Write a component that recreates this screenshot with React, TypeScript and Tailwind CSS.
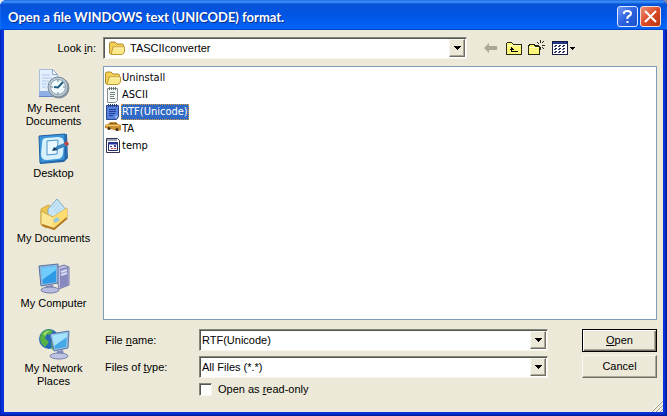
import type { ReactNode } from "react"

const sunken = "border border-[#85877c] border-r-[#f7f5ec] border-b-[#f7f5ec] bg-white shadow-[inset_1px_1px_0_#55564e]"
const raised = "border border-[#f8f7f0] border-r-[#716f64] border-b-[#716f64] bg-[#ece9d8] shadow-[inset_-1px_-1px_0_#aca899]"

const FolderIcon = () => (
    <svg width="16" height="16" viewBox="0 0 16 16" className="shrink-0">
        <path d="M.5 4Q.5 2 2 2h4l2 2h5q1.500 0 1.500 1.500V13L13 14.500H2L.5 13z" fill="#f3cf58" stroke="#ab8a28" />
        <path d="M2 14.500 4 7h11.500v5L13 14.500z" fill="#fce989" stroke="#bd9a35" />
        <path d="M5 8h10" stroke="#fff9cc" />
    </svg>
)

const NotepadIcon = () => (
    <svg width="16" height="16" viewBox="0 0 16 16" className="shrink-0">
        <path d="M2.500 1.500h10v12l-2 2h-8z" fill="#f4f6f3" stroke="#83908d" />
        <path d="M4.500 0v3M6.500 0v3M8.500 0v3M10.500 0v3" stroke="#68716c" />
        <path d="M5 5.500h5M5 7.500h5M5 9.500h4M5 11.500h5" stroke="#76847e" />
    </svg>
)

const RtfIcon = () => (
    <svg width="16" height="16" viewBox="0 0 16 16" className="shrink-0">
        <path d="M1.500 1.500h12v11l-2 3h-10z" fill="#5580dc" stroke="#294691" />
        <path d="M3.500 0v3M5.500 0v3M7.500 0v3M9.500 0v3M11.500 0v3" stroke="#283c7c" />
        <path d="M4 5.500h7M4 7.500h7M4 9.500h6M4 11.500h4" stroke="#223f9a" />
        <path d="m10 12 3-1-2 4z" fill="#a6baf4" />
    </svg>
)

const CarIcon = () => (
    <svg width="16" height="16" viewBox="0 0 16 16" className="shrink-0">
        <path d="M0 4 3 3 5 1h6L13 3l3 1v5l-3 1-8-2-5-1z" fill="#c98f35" />
        <path d="m4 3 2-1h2v1zM9 2h2l1 1H9z" fill="#775622" />
        <path d="M1 4.500h13" stroke="#f4cb67" />
        <circle cx="4" cy="7.500" r="1.500" fill="#463319" />
        <circle cx="12" cy="8.500" r="1.500" fill="#463319" />
    </svg>
)

const TempIcon = () => (
    <svg width="16" height="16" viewBox="0 0 16 16" className="shrink-0">
        <path d="M1.500.5h11l2 2v12h-13z" fill="white" stroke="#30334f" />
        <path d="M2 2h10" stroke="#a1a6ba" strokeWidth="2" />
        <path d="M3.500 4.500h9v8h-9z" fill="#f6f5ff" stroke="#24295f" />
        <path d="M4 5.500h8" stroke="#2635a6" strokeWidth="2" />
        <path d="M5 8h2v1H5zM9 7h2v2H9z" fill="#3b42a0" />
        <path d="M6 10h2v1H6zM9 10h2v1H9z" fill="#cf3945" />
    </svg>
)

const RecentIcon = () => (
    <svg width="32" height="32" viewBox="0 0 32 32">
        <path d="M1.500 1.500h13l5 5V28h-18z" fill="#e3effc" stroke="#a9bddb" />
        <path d="m14.500 1.500 5 5h-5z" fill="#fff" stroke="#8fa5c8" />
        <path d="M4 7h8M4 10h10M4 13h7M4 16h5M4 19h4" stroke="#aec9ec" />
        <path d="M1 23h14v6H1z" fill="#8fb0e6" />
        <path d="M1 28.500h17" stroke="#6585be" />
        <circle cx="21" cy="20" r="10.500" fill="#8996a0" />
        <circle cx="20" cy="19" r="10" fill="#b9c8d1" stroke="#7a8b97" />
        <circle cx="20" cy="19" r="7.500" fill="#f0fafd" stroke="#8fa4b0" />
        <path d="M20 12v2M20 24v2M13 19h2M25 19h2" stroke="#6b8697" />
        <path d="m25 14-5 5.500-4-.5" fill="none" stroke="#1f6180" strokeWidth="2" />
    </svg>
)

const DesktopIcon = () => (
    <svg width="32" height="32" viewBox="0 0 32 32">
        <path d="m2 3 27-2 1 24-4 4-24 2z" fill="#276bad" />
        <path d="m1 3 26-2v26L2 30z" fill="#3c94d9" stroke="#2362a5" />
        <path d="m8 5 12-1q6 0 6 6l-1 11q-1 5-6 5L9 27q-6 0-6-6L4 10q0-5 4-5z" fill="#d6f0fc" />
        <path d="m9 8 11-1-1 14-10 1z" fill="#eaf8ff" stroke="#4e91c4" />
        <path d="m15 17 4-4 10-4 2 3-10 4z" fill="#3b84bf" />
        <path d="m26 10 3-2 2 3-3 2z" fill="#c8453d" />
        <path d="m14 18 2-4 4 3z" fill="#173d64" />
    </svg>
)

const DocumentsIcon = () => (
    <svg width="32" height="32" viewBox="0 0 32 32">
        <path d="m3 11 7-4 4 2 1 18-7 3-5-4z" fill="#edc44c" stroke="#d3aa42" />
        <path d="m10 11 9-10 10 12-8 11-11-5z" fill="#c5e5f7" stroke="#82aac6" />
        <path d="m14 10 5-5M16 13l5-6M18 15l5-5M20 17l4-4" stroke="#a9d2ec" />
        <path d="m3 13 12 6 14-9v10L16 31 3 27z" fill="#fbe794" stroke="#cda447" />
        <path d="m15 19-1 11 15-10V10z" fill="#ffdc70" />
        <path d="m15 22 4-3 3 3-5 3z" fill="#95c8e2" />
        <path d="m4 27 12 4 13-11" fill="none" stroke="#b37b21" strokeWidth="2" />
    </svg>
)

const ComputerIcon = () => (
    <svg width="32" height="32" viewBox="0 0 32 32">
        <path d="m17 5 9-3 5 2v18l-10 4z" fill="#bdbce1" stroke="#777da7" />
        <path d="m22 6 8-2v18l-8 3z" fill="#8889bf" />
        <path d="m23 9 6-2M23 12l6-2" stroke="#d8daf2" strokeWidth="2" />
        <path d="m1 3 19-2v19L3 23z" fill="#92b5dd" stroke="#5474a2" />
        <path d="m3 5 15-2v16L5 21z" fill="#2c9ae7" />
        <path d="M3 5 18 3v4L4 17z" fill="#71ccfa" />
        <path d="m8 23 7-1 1 4H7z" fill="#8085b9" />
        <ellipse cx="12" cy="27" rx="9" ry="3" fill="#b9bddd" stroke="#757bab" />
    </svg>
)

const NetworkIcon = () => (
    <svg width="32" height="32" viewBox="0 0 32 32">
        <circle cx="11" cy="11" r="10" fill="#2469ba" />
        <path d="M3 6Q9-1 15 3l-3 4-3-1-2 4 4 4-4 5Q0 14 3 6M13 14l6-3v8l-5 3z" fill="#56b244" />
        <path d="M5 6q3-4 7-3-4 2-5 5z" fill="#9cda6b" />
        <path d="m12 6 19-3-1 17-14 3z" fill="#97bce1" stroke="#5778aa" />
        <path d="m14 7 15-2-1 14-11 2z" fill="#45a9e8" />
        <path d="m14 7 15-2v4L16 18z" fill="#a5e2fc" />
        <path d="m19 23 6-1 1 5-8 1z" fill="#7f8dbc" />
        <ellipse cx="21" cy="28" rx="9" ry="3" fill="#bec5e2" stroke="#767fac" />
    </svg>
)

const Triangle = () => (
    <svg width="7" height="4" viewBox="0 0 7 4" shapeRendering="crispEdges">
        <path d="M0 0h7v1H0zM1 1h5v1H1zM2 2h3v1H2zM3 3h1v1H3z" fill="black" />
    </svg>
)

const BackIcon = () => (
    <svg width="16" height="16" viewBox="0 0 16 16">
        <path d="m1 8 5-5v3h8v4H6v3z" fill="#aaa797" />
    </svg>
)

const UpIcon = () => (
    <svg width="16" height="16" viewBox="0 0 16 16" shapeRendering="crispEdges">
        <path d="M.5 14.500v-11l1-1h4l2 2h8v10z" fill="#fcf679" stroke="#29290f" />
        <path d="M1 5.500h14" stroke="#fffccb" />
        <path d="M5.500 12V7M3.500 9.500h4M4.500 8.500h2M5 11.500h7" fill="none" stroke="black" />
    </svg>
)

const NewFolderIcon = () => (
    <svg width="17" height="16" viewBox="0 0 17 16" shapeRendering="crispEdges">
        <path d="M.5 14.500v-9l2-1h4l1 2h4v8z" fill="#fcf679" stroke="#29290f" />
        <path d="M1 7.500h10" stroke="#fffccb" />
        <path d="M12.500 0v3M12.500 7v3M8 5.500h3M14 5.500h3M9 2l2 2M14 3l2-2M14 7l2 2" stroke="#29291e" />
    </svg>
)

const ViewsIcon = () => (
    <svg width="16" height="14" viewBox="0 0 16 14" shapeRendering="crispEdges">
        <path d="M.5.5h15v13H.5z" fill="white" stroke="#181d45" />
        <path d="M1 2h14" stroke="#243585" strokeWidth="2" />
        <path d="M2 5h2v1H2zM6 5h2v1H6zM10 5h2v1h-2zM2 8h2v1H2zM6 8h2v1H6zM10 8h2v1h-2zM2 11h2v1H2zM6 11h2v1H6zM10 11h2v1h-2z" fill="#3b4385" />
        <path d="M3 4h2v1H3zM7 4h2v1H7zM11 4h2v1h-2zM3 7h2v1H3zM7 7h2v1H7zM11 7h2v1h-2zM3 10h2v1H3zM7 10h2v1H7zM11 10h2v1h-2z" fill="#222744" />
    </svg>
)

const places = [
    { name: "My Recent Documents", icon: <RecentIcon /> },
    { name: "Desktop", icon: <DesktopIcon /> },
    { name: "My Documents", icon: <DocumentsIcon /> },
    { name: "My Computer", icon: <ComputerIcon /> },
    { name: "My Network Places", icon: <NetworkIcon /> },
]

const files = [
    { name: "Uninstall", icon: <FolderIcon /> },
    { name: "ASCII", icon: <NotepadIcon /> },
    { name: "RTF(Unicode)", icon: <RtfIcon />, selected: true },
    { name: "TA", icon: <CarIcon /> },
    { name: "temp", icon: <TempIcon /> },
]

const Arrow = () => (
    <span className={`pointer-events-none flex w-4 shrink-0 items-center justify-center ${raised}`}>
        <Triangle />
    </span>
)

const Combo = ({ children, className = "" }: { children: ReactNode; className?: string }) => (
    <div className={`flex h-[22px] min-w-0 p-px ${sunken} ${className}`}>{children}</div>
)

const ToolButton = ({ label, children }: { label: string; children: ReactNode }) => (
    <button type="button" aria-label={label} className="flex h-[22px] w-[23px] items-center justify-center">
        {children}
    </button>
)

const TitleBar = () => (
    <header className="flex h-[30px] items-center gap-[2px] bg-linear-to-b from-[#0a52cf] via-[#0055e5] to-[#0465fb] pr-[6px] pl-2 pt-[3px] shadow-[inset_0_1px_0_#2b73e2,inset_0_3px_2px_#3b91ff,inset_0_-1px_0_#0146c7]">
        <h1 className="flex-1 font-['Lato','Open_Sans',sans-serif] text-[13px] leading-4 font-bold text-white [text-shadow:1px_1px_0_#0b318c]">
            Open a file WINDOWS text (UNICODE) format.
        </h1>
        <button type="button" aria-label="Help" className="flex size-[21px] items-center justify-center rounded-[3px] border border-[#dce8ff] bg-linear-to-br from-[#6c97f4] via-[#2c62df] to-[#1d50cb]">
            <svg width="13" height="15" viewBox="0 0 13 15" fill="none" stroke="white" strokeWidth="2">
                <path d="M3 5V4q0-2 3.500-2T10 4.500Q10 6 8 7T6.500 10" />
                <path d="M6.500 12v2" />
            </svg>
        </button>
        <button type="button" aria-label="Close" className="flex size-[21px] items-center justify-center rounded-[3px] border border-[#f7dcd5] bg-linear-to-br from-[#ec8e73] via-[#dc4b28] to-[#b9360f]">
            <svg width="13" height="13" viewBox="0 0 13 13" stroke="white" strokeWidth="2">
                <path d="m1 1 11 11M12 1 1 12" />
            </svg>
        </button>
    </header>
)

export default function App() {
    return <div className="min-h-screen bg-linear-to-r from-[#e9eef8] to-[#8b87a5] flex flex-col">
        <main className="flex flex-1 flex-col overflow-hidden rounded-t-[7px] bg-[#0831d9] font-['Liberation_Sans',Arial,sans-serif] text-[11px] leading-[13px] text-black shadow-[inset_-1px_-1px_0_#001ea0,inset_-2px_-2px_0_#0026b4,inset_1px_0_0_#0026b4]">
            <TitleBar />
            <form className="relative mx-1 mb-1 grid flex-1 grid-cols-[99px_1fr] grid-rows-[36px_1fr] bg-[#ece9d8] pr-[6px]">
                <label htmlFor="look" className="self-center pr-[7px] text-right">Look <u>i</u>n:</label>
                <div className="flex items-center">
                    <Combo className="max-w-[364px] flex-1">
                        <div className="flex items-center pl-1"><FolderIcon /></div>
                        <select id="look" className="min-w-0 flex-1 appearance-none pl-[5px] outline-none">
                            <option>TASCIIconverter</option>
                        </select>
                        <Arrow />
                    </Combo>
                    <div className="ml-3 flex items-center">
                        <ToolButton label="Back"><BackIcon /></ToolButton>
                        <ToolButton label="Up one level"><UpIcon /></ToolButton>
                        <ToolButton label="New folder"><NewFolderIcon /></ToolButton>
                        <button type="button" aria-label="Views" className="flex h-[22px] items-center gap-[2px] pl-1">
                            <ViewsIcon />
                            <svg width="5" height="3" viewBox="0 0 5 3" shapeRendering="crispEdges"><path d="M0 0h5v1H0zM1 1h3v1H1zM2 2h1v1H2z" /></svg>
                        </button>
                    </div>
                </div>

                <nav className="flex flex-col pt-[2px]">
                    {places.map((place) => (
                        <button key={place.name} type="button" className="flex h-[65px] flex-col items-center gap-[2px]">
                            {place.icon}
                            <span className="w-20 text-center">{place.name}</span>
                        </button>
                    ))}
                </nav>

                <div className="flex min-w-0 flex-col">
                    <ul className="flex-1 border border-[#7f9db9] bg-white px-px pt-[2px] font-['DejaVu_Sans_Condensed','DejaVu_Sans',sans-serif]">
                        {files.map((file) => (
                            <li key={file.name} className="flex h-[17px] items-center">
                                {file.icon}
                                <button
                                    type="button"
                                    className={file.selected ? "h-4 bg-[#316ac5] px-px text-white outline-1 -outline-offset-1 outline-dotted outline-[#d59b43]" : "h-4 px-px"}
                                >
                                    {file.name}
                                </button>
                            </li>
                        ))}
                    </ul>
                    <div className="flex justify-between gap-8 pt-[9px] pb-4">
                        <div className="grid max-w-[445px] flex-1 grid-cols-[94px_1fr] items-center gap-y-[5px] pl-[2px]">
                            <label htmlFor="name">File <u>n</u>ame:</label>
                            <Combo>
                                <input id="name" defaultValue="RTF(Unicode)" className="min-w-0 flex-1 pl-px outline-none" />
                                <button type="button" aria-label="Recent names" className={`flex w-4 shrink-0 items-center justify-center ${raised}`}>
                                    <Triangle />
                                </button>
                            </Combo>
                            <label htmlFor="type">Files of <u>t</u>ype:</label>
                            <Combo>
                                <select id="type" className="min-w-0 flex-1 appearance-none pl-px outline-none">
                                    <option>All Files (*.*)</option>
                                </select>
                                <Arrow />
                            </Combo>
                            <label className="col-start-2 flex items-center gap-[6px]">
                                <input type="checkbox" className={`size-[13px] appearance-none checked:bg-[#316ac5] ${sunken}`} />
                                <span>Open as <u>r</u>ead-only</span>
                            </label>
                        </div>
                        <div className="flex w-[75px] flex-col gap-[3px]">
                            <button type="submit" className="h-[23px] border border-black bg-[#ece9d8] shadow-[inset_1px_1px_0_#fff,inset_-1px_-1px_0_#716f64,inset_-2px_-2px_0_#aca899]"><u>O</u>pen</button>
                            <button type="button" className={`h-[23px] ${raised}`}>Cancel</button>
                        </div>
                    </div>
                </div>
                <svg width="12" height="12" viewBox="0 0 12 12" className="absolute right-0 bottom-0" strokeWidth="1">
                    <path d="M1 12 12 1M5 12l7-7M9 12l3-3" stroke="#9f9c8c" />
                    <path d="M0 12 12 0M4 12l8-8M8 12l4-4" stroke="#fff" />
                </svg>
            </form>
        </main>
    </div>
}
